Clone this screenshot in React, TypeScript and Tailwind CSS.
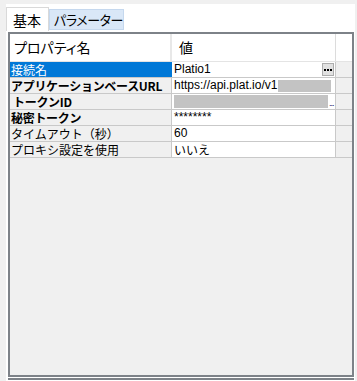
import React from "react";

const jp = { fontFamily: '"Noto Sans CJK JP", "Noto Sans", sans-serif' };
const latin = { fontFamily: '"Liberation Sans", "Noto Sans CJK JP", sans-serif' };

type Row = {
  name: string;
  bold?: boolean;
  selected?: boolean;
  indent?: boolean;
  value: React.ReactNode;
};

function DotsButton() {
  return (
    <div className="ml-auto mr-[1px] flex h-[13px] w-[12px] items-center justify-center border border-[#adadad] bg-[#e1e1e1]">
      <div className="flex gap-[1px]">
        <span className="block h-[2px] w-[2px] bg-black" />
        <span className="block h-[2px] w-[2px] bg-black" />
        <span className="block h-[2px] w-[2px] bg-black" />
      </div>
    </div>
  );
}

const rows: Row[] = [
  {
    name: "接続名",
    selected: true,
    value: (
      <div className="flex w-full items-center">
        <span>Platio1</span>
        <DotsButton />
      </div>
    ),
  },
  {
    name: "アプリケーションベースURL",
    bold: true,
    value: (
      <div className="flex w-full items-center">
        <span>https://api.plat.io/v1</span>
        <span className="ml-[1px] block h-[12px] w-[53px] bg-[#c3c3c3]" />
      </div>
    ),
  },
  {
    name: "トークンID",
    bold: true,
    indent: true,
    value: (
      <div className="flex w-full items-center">
        <span className="block h-[13px] w-[154px] bg-[#c3c3c3]" />
        <span className="ml-[1px] self-end text-[9px] leading-[9px] tracking-[-1px] text-[#1a1a6a]">...</span>
      </div>
    ),
  },
  { name: "秘密トークン", bold: true, value: <span>********</span> },
  { name: "タイムアウト（秒）", value: <span>60</span> },
  { name: "プロキシ設定を使用", value: <span style={jp}>いいえ</span> },
];

export default function App() {
  return (
    <div className="h-[381px] w-[357px] overflow-hidden bg-[#f0f0f0] pl-[6px] pr-[2px] pt-[4px]">
      <div className="flex h-[377px] flex-col bg-white">
        {/* tabs */}
        <div className="flex h-[27px] items-end" style={jp}>
          <div className="flex h-[24px] w-[43px] items-center border border-b-0 border-[#d9d9d9] bg-white pl-[6px] text-[14px] leading-none text-black">
            基本
          </div>
          <div className="mb-[1px] flex h-[21px] w-[75px] items-center whitespace-nowrap border border-[#c5d8ee] bg-[#d9e7f7] pl-[4px] text-[13px] leading-none tracking-[-0.4px] text-black [font-feature-settings:'palt']">
            パラメーター
          </div>
        </div>

        {/* property grid */}
        <div className="ml-[2px] mr-[1px] mt-[1px] flex h-[345px] flex-col border-2 border-[#7d8288] bg-[#f0f0f0]">
          {/* header */}
          <div className="flex h-[28px] border-b border-[#e4e4e4] bg-white" style={jp}>
            <div className="flex w-[162px] items-center border-r-2 border-[#e8e8e8] pl-[4px] text-[14px] text-black [font-feature-settings:'palt']">
              プロパティ名
            </div>
            <div className="flex w-[164px] items-center border-r border-[#dcdcdc] pl-[7px] text-[14px] text-black">
              値
            </div>
            <div className="flex-1" />
          </div>

          {/* rows */}
          {rows.map((r, i) => (
            <div key={i} className="flex h-[16px] border-b border-[#c9c9c9]">
              <div
                className={
                  "flex w-[162px] items-center overflow-hidden whitespace-nowrap border-r text-[12px] leading-[15px] " +
                  (r.selected
                    ? "border-[#0078d7] bg-[#0078d7] text-white"
                    : "border-[#c9c9c9] bg-[#f0f0f0] text-black") +
                  (r.bold ? " font-bold tracking-[-0.3px]" : "") +
                  (r.indent ? " pl-[3px]" : " pl-[1px]")
                }
                style={jp}
              >
                {r.name}
              </div>
              <div
                className="flex w-[164px] items-center overflow-hidden whitespace-nowrap border-r border-[#c9c9c9] bg-white pl-[2px] text-[12px] leading-[15px] text-black"
                style={latin}
              >
                {r.value}
              </div>
              <div className="flex-1 bg-[#f0f0f0]" />
            </div>
          ))}

          <div className="flex-1" />
        </div>
        <div className="ml-[2px] mr-[1px] mt-[1px] h-[2px] bg-[#7d8288]" />
      </div>
    </div>
  );
}
